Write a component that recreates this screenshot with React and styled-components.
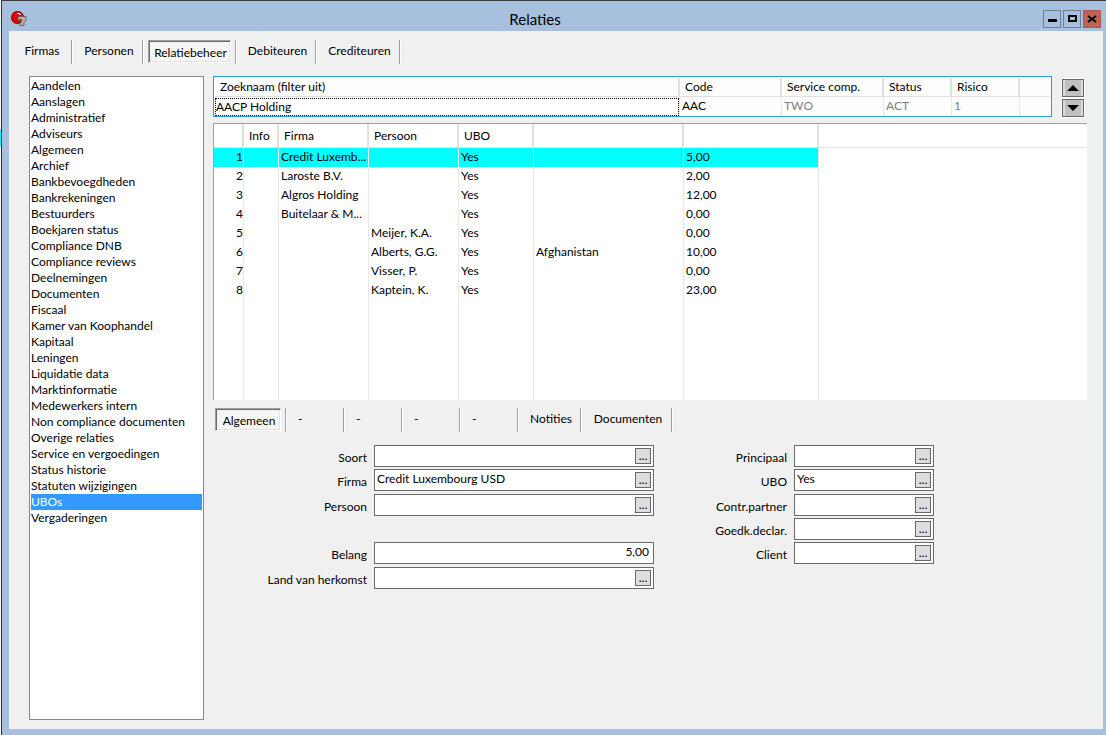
import React, { useState } from 'react'
import styled, { createGlobalStyle } from 'styled-components'

const GlobalStyle = createGlobalStyle`
    * {
        box-sizing: border-box;
    }
    body {
        margin: 0;
        background: #f8f8f8;
    }
    body, button, input {
        font-family: Lato, 'Open Sans', sans-serif;
        font-size: 12px;
        line-height: 16px;
        color: #000;
    }
    button {
        padding: 0;
        cursor: default;
    }
`

const Desktop = styled.div`
    display: flex;
    min-height: 100vh;
`

/* sliver of the window that lies behind this one */
const BackWindow = styled.div`
    width: 1px;
    padding-top: 129px;
`

const BackRow = styled.div`
    height: 17px;
    background: #00ffff;
`

const Window = styled.div`
    flex: 1;
    min-width: 0;
    display: flex;
    flex-direction: column;
    padding: 0 3px 6px 7px;
    border-left: 1px solid #2b3440;
    border-top: 1px solid #3a3a3a;
    background: #a6c0dd;
`

const TitleBar = styled.header`
    display: flex;
    align-items: center;
    height: 30px;
    padding: 6px 2px 0 2px;
`

const Title = styled.h1`
    flex: 1;
    margin: 0;
    font-size: 15px;
    font-weight: 400;
    line-height: 20px;
    text-align: center;
`

const WindowButtons = styled.div`
    display: flex;
    gap: 2px;
`

const WindowButton = styled.button`
    display: flex;
    align-items: center;
    justify-content: center;
    width: 18px;
    height: 18px;
    border: 1px solid ${({ $close }) => ($close ? '#b5584c' : '#6f7f92')};
    background: ${({ $close }) => ($close ? '#bf6355' : '#a6c0dd')};
`

const Body = styled.main`
    flex: 1;
    display: flex;
    flex-direction: column;
    background: #f0f0f0;
`

const Tabs = styled.nav`
    display: flex;
    height: 24px;
`

const MainTabs = styled(Tabs)`
    margin-top: 9px;
`

const DetailTabs = styled(Tabs)`
    margin-top: 8px;
`

const TabCell = styled.div`
    display: flex;
    width: ${({ $width }) => $width}px;
    padding: 0 4px 0 ${({ $inset }) => $inset}px;
    border-right: 1px solid #a0a0a0;
    box-shadow: 1px 0 0 #fff;
`

const Tab = styled.button`
    flex: 1;
    border: 0;
    background: none;
    line-height: 20px;
    padding: 0 0 2px;
    text-align: ${({ $blank }) => ($blank ? 'left' : 'center')};
    padding-left: ${({ $blank }) => ($blank ? 7 : 3)}px;
    white-space: nowrap;
`

const ActiveTab = styled(Tab)`
    height: 23px;
    padding: 1px 0 0 2px;
    border: 1px solid;
    border-color: #a0a0a0 #fff #fff #a0a0a0;
    box-shadow: inset 1px 1px 0 #696969, inset -1px -1px 0 #e3e3e3;
    background: repeating-conic-gradient(#fff 0 25%, #f0f0f0 0 50%) 0 0 / 2px 2px;
    line-height: 19px;
`

const Columns = styled.div`
    flex: 1;
    display: flex;
    gap: 9px;
    padding: 12px 16px 9px 20px;
`

const Sections = styled.ul`
    flex: 0 0 175px;
    margin: 0;
    padding: 1px;
    list-style: none;
    border: 1px solid #828790;
    background: #fff;
`

const Section = styled.button`
    display: block;
    width: 100%;
    height: 16px;
    border: 0;
    text-align: left;
    white-space: nowrap;
    background: ${({ $selected }) => ($selected ? '#3399ff' : 'transparent')};
    color: ${({ $selected }) => ($selected ? '#fff' : '#000')};
`

const Content = styled.section`
    flex: 1;
    min-width: 0;
`

const SearchBar = styled.div`
    display: flex;
    align-items: flex-start;
    gap: 10px;
    padding-right: 3px;
`

const SearchBox = styled.div`
    flex: 1;
    height: 41px;
    padding: 1px;
    border: 1px solid #26a0da;
    background: #fdfdfd;
`

const Table = styled.table`
    width: 100%;
    table-layout: fixed;
    border-collapse: separate;
    border-spacing: 0;
`

const Th = styled.th`
    height: ${({ $height }) => $height}px;
    padding: 0 0 0 5px;
    border-right: 2px solid #e0e0e0;
    border-bottom: 1px solid #e0e0e0;
    font-weight: 400;
    text-align: left;
    white-space: nowrap;
    &:last-child {
        border-right: 0;
    }
`

const Td = styled.td`
    height: 19px;
    padding: 0 0 2px 2px;
    border-right: 1px solid #e8e8e8;
    overflow: hidden;
    text-overflow: ellipsis;
    text-align: ${({ $right }) => ($right ? 'right' : 'left')};
    white-space: nowrap;
    color: ${({ $dim }) => ($dim ? '#808080' : 'inherit')};
    &:last-child {
        border-right: 0;
    }
`

const InputCell = styled(Td)`
    padding: 0;
`

const SearchInput = styled.input`
    display: block;
    width: 100%;
    height: 18px;
    padding: 0;
    border: 1px dotted #000;
    outline: 0;
    background: #fff;
`

const Spinner = styled.div`
    display: flex;
    flex-direction: column;
    padding-top: 3px;
    gap: 2px;
`

const SpinButton = styled.button`
    display: flex;
    align-items: center;
    justify-content: center;
    width: 22px;
    height: 18px;
    border: 1px solid #696969;
    outline: 1px solid #fff;
    background: linear-gradient(90deg, #dcdcdc 2px, #c0c0c0 2px 18px, #dcdcdc 18px);
`

const GridBox = styled.div`
    height: 277px;
    margin-top: 6px;
    border-top: 1px solid #a0a0a0;
    border-left: 1px solid #a0a0a0;
    background: #fff;
`

const GridTable = styled(Table)`
    height: 276px;
`

const Row = styled.tr`
    & > td:not(:last-child) {
        background: ${({ $selected }) => ($selected ? '#00ffff' : 'transparent')};
    }
`

const Filler = styled.tr`
    height: 100%;
`

const Form = styled.form`
    display: flex;
    gap: 40px;
    margin-top: 13px;
    padding-left: 30px;
`

const Fields = styled.div`
    display: grid;
    grid-template-columns: ${({ $label }) => $label}px ${({ $field }) => $field}px;
    grid-template-rows: 24px 25px 24px 24px 25px 24px;
    column-gap: 7px;
`

const Label = styled.label`
    grid-column: 1;
    grid-row: ${({ $row }) => $row};
    padding-top: 5px;
    text-align: right;
    white-space: nowrap;
`

const Field = styled.div`
    grid-column: 2;
    grid-row: ${({ $row }) => $row};
    display: flex;
    align-items: center;
    height: 22px;
    padding-right: 2px;
    border: 1px solid #696969;
    background: #fff;
`

const FieldInput = styled.input`
    flex: 1;
    min-width: 0;
    height: 20px;
    padding: 0 2px 3px;
    border: 0;
    outline: 0;
    background: none;
    text-align: ${({ $right }) => ($right ? 'right' : 'left')};
`

const Lookup = styled.button`
    width: 16px;
    height: 16px;
    border: 1px solid #696969;
    background: #dddddd;
    line-height: 12px;
`

const sections = [
    'Aandelen', 'Aanslagen', 'Administratief', 'Adviseurs', 'Algemeen', 'Archief',
    'Bankbevoegdheden', 'Bankrekeningen', 'Bestuurders', 'Boekjaren status',
    'Compliance DNB', 'Compliance reviews', 'Deelnemingen', 'Documenten', 'Fiscaal',
    'Kamer van Koophandel', 'Kapitaal', 'Leningen', 'Liquidatie data', 'Marktinformatie',
    'Medewerkers intern', 'Non compliance documenten', 'Overige relaties',
    'Service en vergoedingen', 'Status historie', 'Statuten wijzigingen', 'UBOs',
    'Vergaderingen'
]

const mainTabs = [
    { name: 'Firmas', width: 63 },
    { name: 'Personen', width: 71 },
    { name: 'Relatiebeheer', width: 93 },
    { name: 'Debiteuren', width: 80 },
    { name: 'Crediteuren', width: 84 }
]

const detailTabs = [
    { name: 'Algemeen', width: 73 },
    { name: '-', width: 58 },
    { name: '-', width: 58 },
    { name: '-', width: 58 },
    { name: '-', width: 58 },
    { name: 'Notities', width: 63 },
    { name: 'Documenten', width: 91 }
]

const owners = [
    { firma: 'Credit Luxemb...', belang: '5,00' },
    { firma: 'Laroste B.V.', belang: '2,00' },
    { firma: 'Algros Holding', belang: '12,00' },
    { firma: 'Buitelaar & M...', belang: '0,00' },
    { persoon: 'Meijer, K.A.', belang: '0,00' },
    { persoon: 'Alberts, G.G.', land: 'Afghanistan', belang: '10,00' },
    { persoon: 'Visser, P.', belang: '0,00' },
    { persoon: 'Kaptein, K.', belang: '23,00' }
]

const leftFields = [
    { name: 'Soort', row: 1 },
    { name: 'Firma', row: 2, value: 'Credit Luxembourg USD' },
    { name: 'Persoon', row: 3 },
    { name: 'Belang', row: 5, value: '5,00', amount: true },
    { name: 'Land van herkomst', row: 6 }
]

const rightFields = [
    { name: 'Principaal', row: 1 },
    { name: 'UBO', row: 2, value: 'Yes' },
    { name: 'Contr.partner', row: 3 },
    { name: 'Goedk.declar.', row: 4 },
    { name: 'Client', row: 5 }
]

const Logo = () => (
    <svg width="16" height="16" viewBox="0 0 16 16" aria-hidden="true">
        <circle cx="6.5" cy="6.5" r="6.2" fill="#dc0000" stroke="#8c0a0a" strokeWidth="0.8" />
        <path d="M6 2.5h3M8 3.5h2" stroke="#fff" fill="none" />
        <path d="M7 5.5h8v4l-2 2v3H9v-2l2-3H7z" fill="#b8b0b0" stroke="#6a4a4a" strokeWidth="0.8" />
        <path d="M8 8.5h3" stroke="#c83030" />
    </svg>
)

const Arrow = ({ down }) => (
    <svg width="12" height="6" viewBox="0 0 12 6" aria-hidden="true">
        <path d={down ? 'M0 0h12L6 6z' : 'M0 6h12L6 0z'} />
    </svg>
)

const TabBar = ({ bar: Bar, tabs, first }) => {
    const [active, setActive] = useState(first)

    return (
        <Bar>
            {tabs.map(({ name, width }, i) => {
                const Button = active === i ? ActiveTab : Tab
                return (
                    <TabCell key={i} $width={width} $inset={i === 0 && active === 0 ? 2 : 5}>
                        <Button type="button" $blank={name === '-'} onClick={() => setActive(i)}>
                            {name}
                        </Button>
                    </TabCell>
                )
            })}
        </Bar>
    )
}

const FieldGroup = ({ fields, label, field }) => (
    <Fields $label={label} $field={field}>
        {fields.map(({ name, row, value, amount }) => (
            <React.Fragment key={name}>
                <Label htmlFor={name} $row={row}>{name}</Label>
                <Field $row={row}>
                    <FieldInput id={name} defaultValue={value} $right={amount} />
                    {!amount && <Lookup type="button" aria-label={`${name} zoeken`}>...</Lookup>}
                </Field>
            </React.Fragment>
        ))}
    </Fields>
)

const SearchTable = () => (
    <SearchBox>
        <Table>
            <colgroup>
                <col />
                <col width="102" />
                <col width="102" />
                <col width="68" />
                <col width="68" />
                <col width="30" />
            </colgroup>
            <thead>
                <tr>
                    <Th $height={19}><label htmlFor="zoeknaam">Zoeknaam (filter uit)</label></Th>
                    <Th>Code</Th>
                    <Th>Service comp.</Th>
                    <Th>Status</Th>
                    <Th>Risico</Th>
                    <Th />
                </tr>
            </thead>
            <tbody>
                <tr>
                    <InputCell><SearchInput id="zoeknaam" defaultValue="AACP Holding" /></InputCell>
                    <Td>AAC</Td>
                    <Td $dim>TWO</Td>
                    <Td $dim>ACT</Td>
                    <Td $dim>1</Td>
                    <Td />
                </tr>
            </tbody>
        </Table>
    </SearchBox>
)

const OwnerTable = () => {
    const [selected, setSelected] = useState(0)

    return (
        <GridBox>
            <GridTable>
                <colgroup>
                    <col width="30" />
                    <col width="35" />
                    <col width="90" />
                    <col width="90" />
                    <col width="75" />
                    <col width="150" />
                    <col width="135" />
                    <col />
                </colgroup>
                <thead>
                    <tr>
                        <Th $height={24} />
                        <Th>Info</Th>
                        <Th>Firma</Th>
                        <Th>Persoon</Th>
                        <Th>UBO</Th>
                        <Th />
                        <Th />
                        <Th />
                    </tr>
                </thead>
                <tbody>
                    {owners.map(({ firma, persoon, land, belang }, i) => (
                        <Row key={i} $selected={selected === i} onClick={() => setSelected(i)}>
                            <Td $right>{i + 1}</Td>
                            <Td />
                            <Td>{firma}</Td>
                            <Td>{persoon}</Td>
                            <Td>Yes</Td>
                            <Td>{land}</Td>
                            <Td>{belang}</Td>
                            <Td />
                        </Row>
                    ))}
                    <Filler>
                        {Array.from({ length: 8 }, (_, i) => <Td key={i} />)}
                    </Filler>
                </tbody>
            </GridTable>
        </GridBox>
    )
}

const App = () => {
    const [section, setSection] = useState('UBOs')

    return (
        <Desktop>
            <GlobalStyle />
            <BackWindow>
                <BackRow />
            </BackWindow>
            <Window>
                <TitleBar>
                    <Logo />
                    <Title>Relaties</Title>
                    <WindowButtons>
                        <WindowButton aria-label="Minimaliseren">
                            <svg width="10" height="10"><path d="M1 5h9v3H1z" /></svg>
                        </WindowButton>
                        <WindowButton aria-label="Maximaliseren">
                            <svg width="10" height="10"><path d="M2 2h7v5H2z" fill="none" stroke="#000" strokeWidth="2" /></svg>
                        </WindowButton>
                        <WindowButton $close aria-label="Sluiten">
                            <svg width="10" height="10"><path d="M1 2l8 6M9 2L1 8" stroke="#000" strokeWidth="2" /></svg>
                        </WindowButton>
                    </WindowButtons>
                </TitleBar>
                <Body>
                    <TabBar bar={MainTabs} tabs={mainTabs} first={2} />
                    <Columns>
                        <Sections>
                            {sections.map(name => (
                                <li key={name}>
                                    <Section
                                        type="button"
                                        $selected={name === section}
                                        onClick={() => setSection(name)}
                                    >
                                        {name}
                                    </Section>
                                </li>
                            ))}
                        </Sections>
                        <Content>
                            <SearchBar>
                                <SearchTable />
                                <Spinner>
                                    <SpinButton type="button" aria-label="Vorige"><Arrow /></SpinButton>
                                    <SpinButton type="button" aria-label="Volgende"><Arrow down /></SpinButton>
                                </Spinner>
                            </SearchBar>
                            <OwnerTable />
                            <TabBar bar={DetailTabs} tabs={detailTabs} first={0} />
                            <Form>
                                <FieldGroup fields={leftFields} label={124} field={280} />
                                <FieldGroup fields={rightFields} label={93} field={140} />
                            </Form>
                        </Content>
                    </Columns>
                </Body>
            </Window>
        </Desktop>
    )
}

export default App
